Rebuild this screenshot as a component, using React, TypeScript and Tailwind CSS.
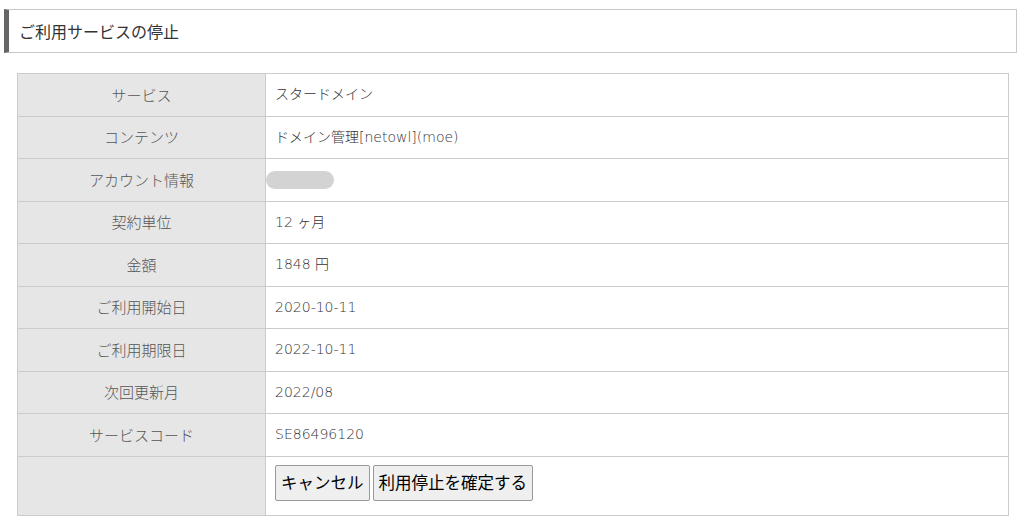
import React from "react";

const rows: [string, React.ReactNode][] = [
  ["サービス", "スタードメイン"],
  ["コンテンツ", "ドメイン管理[netowl](moe)"],
  ["アカウント情報", <span className="ml-[-9px] block h-[18px] w-[68px] rounded-full bg-[#d3d3d3]" />],
  ["契約単位", "12 ヶ月"],
  ["金額", "1848 円"],
  ["ご利用開始日", "2020-10-11"],
  ["ご利用期限日", "2022-10-11"],
  ["次回更新月", "2022/08"],
  ["サービスコード", "SE86496120"],
];

export default function App() {
  return (
    <div
      className="h-[523px] w-[1024px] bg-white pt-[9px]"
      style={{ fontFamily: '"Noto Sans CJK JP", "Noto Sans", sans-serif' }}
    >
      <div className="ml-[4px] mr-[7px] flex h-[44px] items-center border border-l-[5px] border-[#c8c8c8] border-l-[#666] pl-[10px] text-[16px] text-[#333]">
        ご利用サービスの停止
      </div>
      <table className="ml-[17px] mt-[20px] w-[992px] border-collapse text-[14px] font-light">
        <tbody>
          {rows.map(([k, v], i) => (
            <tr key={i} className="h-[42.5px]">
              <td className="w-[248px] border border-[#cccccc] bg-[#e6e6e6] text-center text-[15px] text-[#555]">
                {k}
              </td>
              <td
                className="border border-[#cccccc] pl-[9px] text-[14px] font-extralight text-[#333]"
                style={{ fontFamily: '"DejaVu Sans", "Noto Sans CJK JP", sans-serif' }}
              >
                {v}
              </td>
            </tr>
          ))}
          <tr className="h-[59px]">
            <td className="w-[248px] border border-[#cccccc] bg-[#e6e6e6]" />
            <td className="border border-[#cccccc] pl-[9px] pt-[8px] align-top">
              <div className="flex gap-[3px]">
                <button className="h-[36px] rounded-[2px] border border-[#999] bg-[#efefef] px-[5px] text-[16.5px] font-normal text-black">
                  キャンセル
                </button>
                <button className="h-[36px] rounded-[2px] border border-[#999] bg-[#efefef] px-[5px] text-[16.5px] font-normal text-black">
                  利用停止を確定する
                </button>
              </div>
            </td>
          </tr>
        </tbody>
      </table>
    </div>
  );
}
